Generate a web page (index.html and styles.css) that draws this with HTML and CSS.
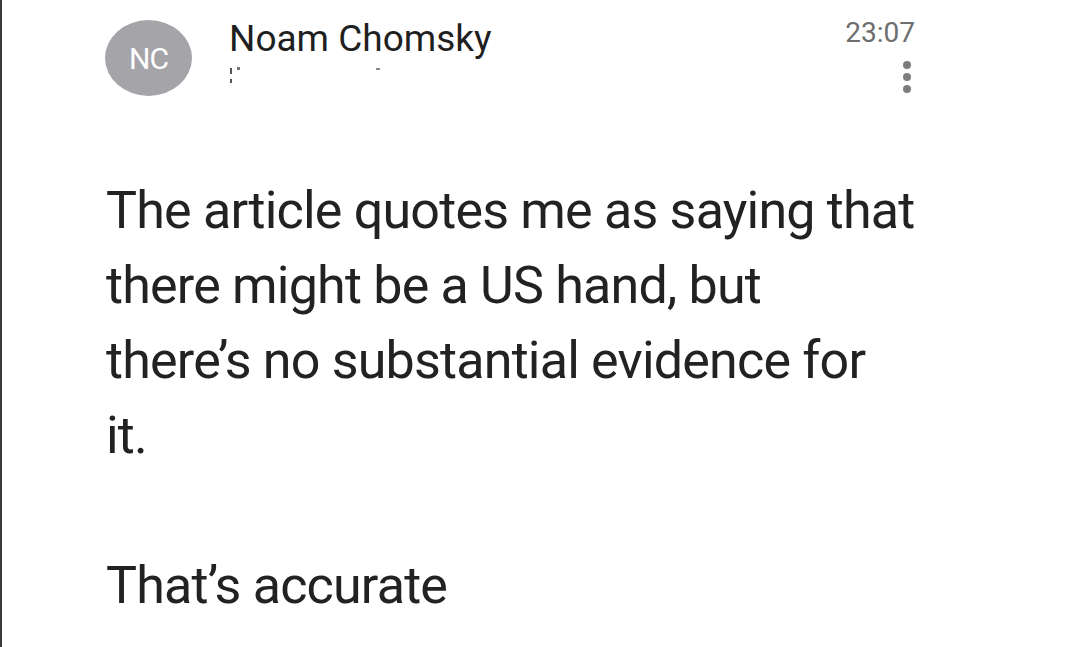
FILE: index.html
```html
<!DOCTYPE html>
<html>
<head>
<meta charset="utf-8">
<link rel="stylesheet" href="styles.css">
</head>
<body>
<div class="page">
  <header class="head">
    <div class="avatar">NC</div>
    <div class="who">
      <div class="name">Noam Chomsky</div>
      <div class="addr"><span class="m1"></span><span class="m2"></span><span class="m3"></span><span class="m4"></span></div>
    </div>
    <div class="meta">
      <div class="time">23:07</div>
      <div class="more"><span></span><span></span><span></span></div>
    </div>
  </header>
  <main class="body">
    <p>The article quotes me as saying that<br>there might be a US hand, but<br>there’s no substantial evidence for<br>it.</p>
    <p class="reply">That’s accurate</p>
  </main>
</div>
</body>
</html>
```

FILE: styles.css
```css
html, body {
  margin: 0;
  padding: 0;
  background: #fff;
}
body {
  font-family: Roboto, "Liberation Sans", sans-serif;
  color: #222;
}
.page {
  width: 1080px;
  height: 647px;
  box-sizing: border-box;
  border-left: 2px solid #3a3a3a;
  overflow: hidden;
}
.head {
  display: flex;
  align-items: flex-start;
  padding: 20px 0 0 103px;
}
.avatar {
  width: 87px;
  height: 76px;
  border-radius: 50%;
  background: #a5a4a9;
  color: #fff;
  font-size: 30px;
  letter-spacing: -1px;
  display: flex;
  align-items: center;
  justify-content: center;
  flex: none;
}
.who {
  margin-left: 37px;
  width: 560px;
}
.name {
  font-size: 37px;
  line-height: 38px;
  color: #1f1f1f;
}
.addr {
  position: relative;
  height: 30px;
}
.addr span {
  position: absolute;
  background: #555;
}
.addr .m1 { left: 1px; top: 10px; width: 2px; height: 6px; }
.addr .m2 { left: 1px; top: 21px; width: 2px; height: 4px; }
.addr .m3 { left: 8px; top: 9px; width: 3px; height: 3px; background: #777; }
.addr .m4 { left: 147px; top: 10px; width: 4px; height: 2px; background: #888; }
.meta {
  margin-left: 54px;
  display: flex;
  flex-direction: column;
  align-items: flex-end;
  width: 72px;
}
.time {
  font-size: 28px;
  line-height: 26px;
  color: #6e6e6e;
}
.more {
  display: flex;
  flex-direction: column;
  gap: 4px;
  margin-top: 15px;
  margin-right: 4px;
}
.more span {
  width: 8px;
  height: 8px;
  border-radius: 50%;
  background: #7d7d7d;
}
.body {
  padding: 77px 0 0 104px;
}
.body p {
  margin: 0;
  font-size: 52px;
  line-height: 75px;
  letter-spacing: -0.8px;
  color: #222;
}
.body .reply {
  margin-top: 75px;
}
```
